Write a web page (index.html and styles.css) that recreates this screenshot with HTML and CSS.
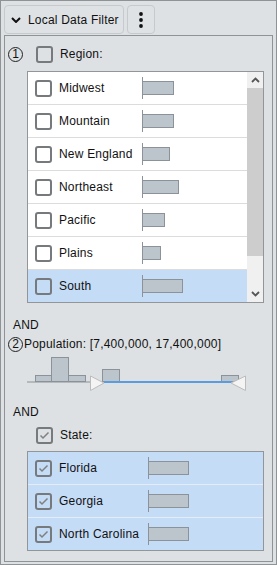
FILE: index.html
```html
<!DOCTYPE html>
<html>
<head>
<meta charset="utf-8">
<link rel="stylesheet" href="styles.css">
</head>
<body>
<div class="widget">
  <div class="toolbar">
    <button class="btn btn-main">
      <svg class="chev" width="10" height="6" viewBox="0 0 10 6"><polyline points="1,1 5,5 9,1" fill="none" stroke="#111" stroke-width="2"/></svg>
      <span>Local Data Filter</span>
    </button>
    <button class="btn btn-kebab">
      <svg width="4" height="16" viewBox="0 0 4 16"><circle cx="2" cy="2" r="1.9" fill="#111"/><circle cx="2" cy="8" r="1.9" fill="#111"/><circle cx="2" cy="14" r="1.9" fill="#111"/></svg>
    </button>
  </div>
  <div class="panel">
    <div class="head-row">
      <span class="num">1</span>
      <span class="cb"></span>
      <span class="head-label">Region:</span>
    </div>
    <div class="list list-region">
      <div class="rows">
        <div class="row"><span class="cb"></span><span class="lbl">Midwest</span><span class="tick"><span class="bar" style="width:31px"></span></span></div>
        <div class="row"><span class="cb"></span><span class="lbl">Mountain</span><span class="tick"><span class="bar" style="width:31px"></span></span></div>
        <div class="row"><span class="cb"></span><span class="lbl">New England</span><span class="tick"><span class="bar" style="width:27px"></span></span></div>
        <div class="row"><span class="cb"></span><span class="lbl">Northeast</span><span class="tick"><span class="bar" style="width:36px"></span></span></div>
        <div class="row"><span class="cb"></span><span class="lbl">Pacific</span><span class="tick"><span class="bar" style="width:22px"></span></span></div>
        <div class="row"><span class="cb"></span><span class="lbl">Plains</span><span class="tick"><span class="bar" style="width:18px"></span></span></div>
        <div class="row selected"><span class="cb"></span><span class="lbl">South</span><span class="tick"><span class="bar" style="width:40px"></span></span></div>
      </div>
      <div class="scrollbar">
        <div class="sb-btn"><svg width="9" height="6" viewBox="0 0 9 6"><polyline points="1,5 4.5,1.5 8,5" fill="none" stroke="#555" stroke-width="1.8"/></svg></div>
        <div class="sb-thumb"></div>
        <div class="sb-track"></div>
        <div class="sb-btn"><svg width="9" height="6" viewBox="0 0 9 6"><polyline points="1,1 4.5,4.5 8,1" fill="none" stroke="#555" stroke-width="1.8"/></svg></div>
      </div>
    </div>
    <div class="and and1">AND</div>
    <div class="range-row">
      <span class="num">2</span>
      <span class="range-label">Population: [7,400,000, 17,400,000]</span>
    </div>
    <svg class="hist" width="222" height="40" viewBox="0 0 222 40">
      <rect x="0" y="26" width="66" height="2" fill="#b4b9be"/>
      <rect x="8.5" y="20.5" width="16" height="6" fill="#bcc4cc" stroke="#8c9299"/>
      <rect x="24.5" y="2.5" width="17" height="24" fill="#bcc4cc" stroke="#8c9299"/>
      <rect x="41.5" y="20.5" width="17" height="6" fill="#bcc4cc" stroke="#8c9299"/>
      <rect x="75.5" y="14.5" width="17" height="12" fill="#bcc4cc" stroke="#8c9299"/>
      <rect x="194.5" y="20.5" width="17" height="6" fill="#bcc4cc" stroke="#8c9299"/>
      <rect x="77" y="26" width="128" height="2" fill="#5b9be0"/>
      <polygon points="63.5,21 63.5,35.5 77,28" fill="#f4f4f4" stroke="#bcbcbc"/>
      <polygon points="218.5,21 218.5,35.5 204,28" fill="#f4f4f4" stroke="#bcbcbc"/>
    </svg>
    <div class="and and2">AND</div>
    <div class="head-row state-head">
      <span class="cb checked"><svg width="13" height="13" viewBox="0 0 13 13"><polyline points="2.5,6.5 5,9 10.5,3.5" fill="none" stroke="#808080" stroke-width="1.5"/></svg></span>
      <span class="head-label">State:</span>
    </div>
    <div class="list list-state">
      <div class="rows">
        <div class="row selected"><span class="cb checked"><svg width="13" height="13" viewBox="0 0 13 13"><polyline points="2.5,6.5 5,9 10.5,3.5" fill="none" stroke="#808080" stroke-width="1.5"/></svg></span><span class="lbl">Florida</span><span class="tick"><span class="bar" style="width:40px"></span></span></div>
        <div class="row selected"><span class="cb checked"><svg width="13" height="13" viewBox="0 0 13 13"><polyline points="2.5,6.5 5,9 10.5,3.5" fill="none" stroke="#808080" stroke-width="1.5"/></svg></span><span class="lbl">Georgia</span><span class="tick"><span class="bar" style="width:40px"></span></span></div>
        <div class="row selected"><span class="cb checked"><svg width="13" height="13" viewBox="0 0 13 13"><polyline points="2.5,6.5 5,9 10.5,3.5" fill="none" stroke="#808080" stroke-width="1.5"/></svg></span><span class="lbl">North Carolina</span><span class="tick"><span class="bar" style="width:40px"></span></span></div>
      </div>
    </div>
  </div>
</div>
</body>
</html>
```

FILE: styles.css
```css
* { box-sizing: border-box; }
html, body { margin: 0; padding: 0; }
body {
  font-family: "Liberation Sans", Arial, sans-serif;
  font-size: 12px;
  letter-spacing: 0.2px;
  color: #111;
  background: #dde1e4;
}
.widget {
  width: 277px;
  height: 565px;
  border: 1px solid #8f9396;
  background: #dde1e4;
  padding: 4px 3px 2px 3px;
  display: flex;
  flex-direction: column;
}
.toolbar {
  display: flex;
  gap: 3px;
  height: 29px;
}
.btn {
  font: inherit;
  letter-spacing: inherit;
  color: inherit;
  background: #dee2e5;
  border: 1px solid #c6cacd;
  border-radius: 4px;
  height: 29px;
  padding: 0;
  margin: 0;
  display: flex;
  align-items: center;
}
.btn-main {
  width: 120px;
  padding-left: 6px;
  gap: 7px;
}
.btn-kebab {
  width: 28px;
  justify-content: center;
}
.panel {
  flex: 1;
  margin-top: 1px;
  border: 1px solid #8f9396;
  padding: 9px 0 0 3px;
  display: flex;
  flex-direction: column;
}
.head-row {
  display: flex;
  align-items: center;
  height: 18px;
}
.num {
  width: 15px;
  height: 15px;
  border: 1px solid #222;
  border-radius: 50%;
  display: flex;
  align-items: center;
  justify-content: center;
  font-size: 12px;
  letter-spacing: 0;
  line-height: 1;
}
.head-row .num { margin-right: 13px; }
.cb {
  width: 17px;
  height: 17px;
  border: 2px solid #777a7d;
  border-radius: 3px;
  flex: none;
  display: flex;
  align-items: center;
  justify-content: center;
}
.head-label { margin-left: 7px; }
.list {
  margin-left: 19px;
  width: 237px;
  border: 1px solid #929699;
  background: #fff;
  display: flex;
}
.list-region { margin-top: 8px; height: 232px; }
.rows { flex: 1; display: flex; flex-direction: column; }
.row {
  height: 33px;
  border-bottom: 1px solid #dcdcdc;
  display: flex;
  align-items: center;
  padding-left: 7px;
}
.row:last-child { height: 32px; border-bottom: none; }
.row.selected { background: #c5dcf7; }
.list-state .row { border-bottom-color: #e3ecf7; }
.list-state .row:last-child { border-bottom: none; }
.lbl { margin-left: 7px; width: 83px; flex: none; white-space: nowrap; }
.list-state .lbl { width: 89px; }
.tick {
  height: 22px;
  border-left: 1px solid #8c9299;
  display: flex;
  align-items: center;
}
.bar {
  height: 14px;
  border: 1px solid #8c9299;
  border-left: none;
  background: #bcc4cc;
}
.scrollbar {
  width: 16px;
  background: #f0f0f0;
  display: flex;
  flex-direction: column;
}
.sb-btn {
  height: 16px;
  display: flex;
  align-items: center;
  justify-content: center;
}
.sb-thumb { height: 168px; background: #cdcdcd; }
.sb-track { flex: 1; }
.and { margin-left: 5px; line-height: 14px; }
.and1 { margin-top: 15px; }
.range-row {
  margin-top: 4px;
  display: flex;
  align-items: center;
  height: 16px;
  gap: 1px;
}
.hist { display: block; margin-left: 19px; margin-top: 3px; }
.and2 { margin-top: 10px; }
.state-head { margin-top: 7px; padding-left: 28px; }
.list-state { margin-top: 7px; height: 100px; }
```
